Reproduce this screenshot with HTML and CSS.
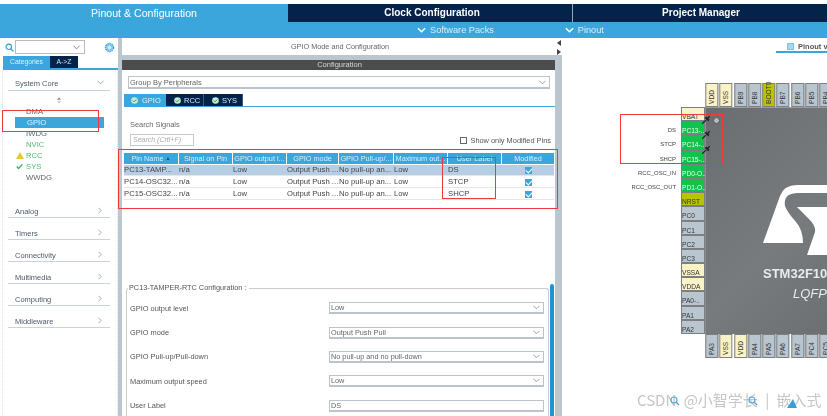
FILE: index.html
```html
<!DOCTYPE html>
<html lang="en">
<head>
<meta charset="utf-8">
<title>Pinout &amp; Configuration</title>
<link rel="stylesheet" href="styles.css">
</head>
<body>
<div class="page">
  <header class="head">
    <div class="tabs-top">
      <div class="top-tab top-on tw1">Pinout &amp; Configuration</div>
      <div class="top-tab tw2">Clock Configuration</div>
      <div class="top-tab tw3">Project Manager</div>
    </div>
    <div class="subbar">
      <span class="sub sub1"><svg class="sub-ch" viewBox="0 0 10 6"><path d="M1 1l4 4 4-4" fill="none" stroke="#fff" stroke-width="1.6"/></svg>Software Packs</span>
      <span class="sub sub2"><svg class="sub-ch" viewBox="0 0 10 6"><path d="M1 1l4 4 4-4" fill="none" stroke="#fff" stroke-width="1.6"/></svg>Pinout</span>
    </div>
  </header>
  <main class="work">
    <aside class="side">
      <div class="side-search">
        <svg class="ic-search" viewBox="0 0 10 10"><circle cx="4.2" cy="4.2" r="3" fill="none" stroke="#2b9bd6" stroke-width="1.3"/><path d="M6.5 6.5L9.4 9.4" stroke="#2b9bd6" stroke-width="1.4"/></svg>
        <div class="combo"><svg class="chev" viewBox="0 0 8 5"><path d="M.5.5L4 4 7.5.5" fill="none" stroke="#777" stroke-width="1"/></svg></div>
        <svg class="ic-gear" viewBox="0 0 12 12"><circle cx="6" cy="6" r="4.2" fill="none" stroke="#3aa5dc" stroke-width="1.8" stroke-dasharray="1.8 .6"/><circle cx="6" cy="6" r="2.8" fill="#d5ecf8" stroke="#3aa5dc" stroke-width=".8"/></svg>
      </div>
      <div class="side-tabs">
        <div class="stab stab-on">Categories</div>
        <div class="stab">A-&gt;Z</div>
      </div>
      <div class="side-body">
        <div class="grp grp-open"><span>System Core</span><svg class="grp-ch" viewBox="0 0 8 5"><path d="M.5.5L4 4 7.5.5" fill="none" stroke="#888" stroke-width=".9"/></svg></div>
        <div class="sort"><svg class="ic-sort" viewBox="0 0 5 8"><path d="M2.5 0L5 3H0z" fill="#888"/><path d="M0 4.5h5L2.5 8z" fill="#ccc"/></svg></div>
        <div class="item">DMA</div>
        <div class="item item-on">GPIO</div>
        <div class="item">IWDG</div>
        <div class="item item-g">NVIC</div>
        <div class="item item-g"><svg class="ic-warn" viewBox="0 0 8 7"><path d="M4 0l4 7H0z" fill="#e6cb2c"/></svg>RCC</div>
        <div class="item item-g"><svg class="ic-ok" viewBox="0 0 8 7"><path d="M.8 3.5l2.2 2.3L7.2 1" fill="none" stroke="#2bb35a" stroke-width="1.4"/></svg>SYS</div>
        <div class="item">WWDG</div>
        <div class="groups">
          <div class="grp"><span>Analog</span><svg class="grp-r" viewBox="0 0 5 8"><path d="M.5.5L4 4 .5 7.5" fill="none" stroke="#888" stroke-width=".9"/></svg></div>
          <div class="grp"><span>Timers</span><svg class="grp-r" viewBox="0 0 5 8"><path d="M.5.5L4 4 .5 7.5" fill="none" stroke="#888" stroke-width=".9"/></svg></div>
          <div class="grp"><span>Connectivity</span><svg class="grp-r" viewBox="0 0 5 8"><path d="M.5.5L4 4 .5 7.5" fill="none" stroke="#888" stroke-width=".9"/></svg></div>
          <div class="grp"><span>Multimedia</span><svg class="grp-r" viewBox="0 0 5 8"><path d="M.5.5L4 4 .5 7.5" fill="none" stroke="#888" stroke-width=".9"/></svg></div>
          <div class="grp"><span>Computing</span><svg class="grp-r" viewBox="0 0 5 8"><path d="M.5.5L4 4 .5 7.5" fill="none" stroke="#888" stroke-width=".9"/></svg></div>
          <div class="grp"><span>Middleware</span><svg class="grp-r" viewBox="0 0 5 8"><path d="M.5.5L4 4 .5 7.5" fill="none" stroke="#888" stroke-width=".9"/></svg></div>
        </div>
      </div>
    </aside>
    <div class="split"></div>
    <section class="center">
      <div class="c-title">GPIO Mode and Configuration</div>
      <div class="c-band"></div>
      <div class="c-dark">Configuration</div>
      <div class="sel sel-group">Group By Peripherals<svg class="chev" viewBox="0 0 8 5"><path d="M.5.5L4 4 7.5.5" fill="none" stroke="#888" stroke-width=".9"/></svg></div>
      <div class="ptabs">
        <div class="ptab ptab-on ptw1"><svg class="ic-tick" viewBox="0 0 8 8"><circle cx="4" cy="4" r="3.8" fill="#c5ecd0"/><path d="M2 4l1.5 1.5L6 2.8" fill="none" stroke="#2a9d55" stroke-width="1.1"/></svg>GPIO</div>
        <div class="ptab ptw2"><svg class="ic-tick" viewBox="0 0 8 8"><circle cx="4" cy="4" r="3.8" fill="#c5ecd0"/><path d="M2 4l1.5 1.5L6 2.8" fill="none" stroke="#2a9d55" stroke-width="1.1"/></svg>RCC</div>
        <div class="ptab ptw3"><svg class="ic-tick" viewBox="0 0 8 8"><circle cx="4" cy="4" r="3.8" fill="#c5ecd0"/><path d="M2 4l1.5 1.5L6 2.8" fill="none" stroke="#2a9d55" stroke-width="1.1"/></svg>SYS</div>
      </div>
      <div class="s-title">Search Signals</div>
      <div class="s-row">
        <div class="s-input">Search (Crtl+F)</div>
        <label class="s-check"><span class="box"></span>Show only Modified Pins</label>
      </div>
      <div class="tbl">
        <div class="tr th">
          <div class="td">Pin Name <span class="caret">&#9650;</span></div><div class="td">Signal on Pin</div><div class="td">GPIO output l...</div><div class="td">GPIO mode</div><div class="td">GPIO Pull-up/...</div><div class="td">Maximum out...</div><div class="td">User Label</div><div class="td">Modified</div>
        </div>
        <div class="tr tr-on">
          <div class="td">PC13-TAMP...</div><div class="td">n/a</div><div class="td">Low</div><div class="td">Output Push ...</div><div class="td">No pull-up an...</div><div class="td">Low</div><div class="td">DS</div><div class="td td-c"><span class="cb"></span></div>
        </div>
        <div class="tr">
          <div class="td">PC14-OSC32...</div><div class="td">n/a</div><div class="td">Low</div><div class="td">Output Push ...</div><div class="td">No pull-up an...</div><div class="td">Low</div><div class="td">STCP</div><div class="td td-c"><span class="cb"></span></div>
        </div>
        <div class="tr">
          <div class="td">PC15-OSC32...</div><div class="td">n/a</div><div class="td">Low</div><div class="td">Output Push ...</div><div class="td">No pull-up an...</div><div class="td">Low</div><div class="td">SHCP</div><div class="td td-c"><span class="cb"></span></div>
        </div>
      </div>
      <div class="cfg">
        <fieldset class="fs">
          <legend class="lg">PC13-TAMPER-RTC Configuration :</legend>
          <div class="f-row"><span>GPIO output level</span><div class="sel">Low<svg class="chev" viewBox="0 0 8 5"><path d="M.5.5L4 4 7.5.5" fill="none" stroke="#888" stroke-width=".9"/></svg></div></div>
          <div class="f-row"><span>GPIO mode</span><div class="sel">Output Push Pull<svg class="chev" viewBox="0 0 8 5"><path d="M.5.5L4 4 7.5.5" fill="none" stroke="#888" stroke-width=".9"/></svg></div></div>
          <div class="f-row"><span>GPIO Pull-up/Pull-down</span><div class="sel">No pull-up and no pull-down<svg class="chev" viewBox="0 0 8 5"><path d="M.5.5L4 4 7.5.5" fill="none" stroke="#888" stroke-width=".9"/></svg></div></div>
          <div class="f-row"><span>Maximum output speed</span><div class="sel">Low<svg class="chev" viewBox="0 0 8 5"><path d="M.5.5L4 4 7.5.5" fill="none" stroke="#888" stroke-width=".9"/></svg></div></div>
          <div class="f-row"><span>User Label</span><div class="sel">DS</div></div>
        </fieldset>
        <div class="vbar"></div>
      </div>
    </section>
    <div class="split split-r"><i class="tri tri-l"></i><i class="tri tri-r"></i></div>
    <section class="pinout">
      <div class="pv-tab"><span class="pv-ic"></span>Pinout view</div>
      <div class="pkg">
        <div class="corner"></div>
        <div class="pins-top">
          <div class="pin v cream">VDD</div>
          <div class="pin v cream">VSS</div>
          <div class="pin v">PB9</div>
          <div class="pin v">PB8</div>
          <div class="pin v olive">BOOT0</div>
          <div class="pin v">PB7</div>
          <div class="pin v">PB6</div>
          <div class="pin v">PB5</div>
          <div class="pin v">PB4</div>
        </div>
        <div class="pins-left">
          <div class="pin h cream">VBAT</div>
          <div class="pin h green"><span class="sig">DS</span>PC13-..</div>
          <div class="pin h green"><span class="sig">STCP</span>PC14-..</div>
          <div class="pin h green"><span class="sig">SHCP</span>PC15-..</div>
          <div class="pin h green"><span class="sig">RCC_OSC_IN</span>PD0-O..</div>
          <div class="pin h green"><span class="sig">RCC_OSC_OUT</span>PD1-O..</div>
          <div class="pin h olive">NRST</div>
          <div class="pin h">PC0</div>
          <div class="pin h">PC1</div>
          <div class="pin h">PC2</div>
          <div class="pin h">PC3</div>
          <div class="pin h cream">VSSA</div>
          <div class="pin h cream">VDDA</div>
          <div class="pin h">PA0-..</div>
          <div class="pin h">PA1</div>
          <div class="pin h">PA2</div>
        </div>
        <div class="chip">
          <span class="dot"></span>
          <svg class="thumb t1" viewBox="0 0 9 9"><path d="M1 8l3-3" stroke="#222" stroke-width="1"/><path d="M3 3.2L5.800 6 7 4.800 6 3.800 7.500 2.300 6.700 1.500 5.200 3 4.200 2z" fill="#222"/></svg>
          <svg class="thumb t2" viewBox="0 0 9 9"><path d="M1 8l3-3" stroke="#222" stroke-width="1"/><path d="M3 3.2L5.800 6 7 4.800 6 3.800 7.500 2.300 6.700 1.500 5.200 3 4.200 2z" fill="#222"/></svg>
          <svg class="thumb t3" viewBox="0 0 9 9"><path d="M1 8l3-3" stroke="#222" stroke-width="1"/><path d="M3 3.2L5.800 6 7 4.800 6 3.800 7.500 2.300 6.700 1.500 5.200 3 4.200 2z" fill="#222"/></svg>
          <svg class="st" viewBox="0 0 70 72"><path d="M2 58L19 11Q23 0 36 0H70V8H37Q22 8 24 21Q26 27 35 37Q42 45 42 58Z" fill="#fff"/><path d="M36 22H70V70H46L54 47Q55 41 48 34Z" fill="#fff"/></svg>
          <div class="c-name">STM32F103C8Tx</div>
          <div class="c-pack">LQFP48</div>
        </div>
        <div class="pins-bottom">
          <div class="pin v">PA3</div>
          <div class="pin v cream">VSS</div>
          <div class="pin v cream">VDD</div>
          <div class="pin v">PA4</div>
          <div class="pin v">PA5</div>
          <div class="pin v">PA6</div>
          <div class="pin v">PA7</div>
          <div class="pin v">PC4</div>
          <div class="pin v">PC5</div>
        </div>
      </div>
    </section>
  </main>
  <div class="mark m1"></div>
  <div class="mark m2"></div>
  <div class="mark m3"></div>
  <div class="mark m4"></div>
  <div class="wm">CSDN @小智学长 | 嵌入式</div>
  <svg class="lens l1" viewBox="0 0 10 10"><circle cx="4" cy="4" r="3" fill="none" stroke="#4aa8dc" stroke-width="1.1"/><path d="M6 6l3 3" stroke="#4aa8dc" stroke-width="1.3"/></svg>
  <svg class="lens l2" viewBox="0 0 10 10"><circle cx="4" cy="4" r="3" fill="none" stroke="#4aa8dc" stroke-width="1.1"/><path d="M6 6l3 3" stroke="#4aa8dc" stroke-width="1.3"/></svg>
  <svg class="lens l3" viewBox="0 0 10 10"><path d="M0 10L6 1l4 9z" fill="#3a9fd8"/></svg>
</div>
</body>
</html>
```
FILE: styles.css
```css
* { box-sizing: border-box; }
html, body { margin: 0; height: 100%; background: #fff; }
.page { position: relative; width: 827px; height: 416px; overflow: hidden; font-family: "Liberation Sans", Arial, sans-serif; color: #555; padding-top: 4px; display: flex; flex-direction: column; filter: blur(0.3px); }
.tabs-top { display: flex; height: 18px; }
.top-tab { font-size: 10px; font-weight: 700; color: #fff; background: #03234b; text-align: center; line-height: 18px; }
.top-on { background: #3aa6dc; font-weight: 400; font-size: 10.6px; }
.tw1 { width: 288px; }
.tw2 { width: 284px; padding-left: 4px; }
.tw3 { width: 255px; border-left: 1px solid #9aa7b5; padding-left: 2px; }
.subbar { height: 16px; background: #3aa6dc; display: flex; font-size: 9.2px; color: #d9f0fb; line-height: 16px; }
.sub { display: flex; align-items: center; gap: 4px; }
.sub1 { margin-left: 417px; }
.sub2 { margin-left: 71px; }
.sub-ch { width: 9px; height: 6px; }
.work { flex: 1; display: grid; grid-template-columns: 118px 4px 433px 7px 265px; min-height: 0; }
.side { display: flex; flex-direction: column; font-size: 7.5px; }
.side-search { height: 18px; display: flex; align-items: center; padding-left: 5px; }
.ic-search { width: 9px; height: 9px; }
.combo { width: 70px; height: 14px; margin-left: 1px; border: 1px solid #bbb; display: flex; align-items: center; justify-content: flex-end; padding-right: 4px; }
.chev { width: 7px; height: 5px; flex: none; }
.ic-gear { width: 11px; height: 11px; margin-left: 19px; }
.side-tabs { display: flex; margin-left: 3px; height: 14px; border-bottom: 2px solid #3aa6dc; }
.stab { width: 28px; height: 12px; background: #03234b; color: #d6e2ee; font-size: 6.8px; line-height: 12px; text-align: center; }
.stab-on { width: 47px; background: #3aa6dc; color: #dff1fb; }
.side-body { flex: 1; border-left: 1px dotted #ddd; border-right: 1px dotted #ddd; border-bottom: 1px dotted #ddd; margin-left: 2px; padding-top: 4px; }
.grp { height: 22px; margin: 0 7px 0 5px; border-bottom: 1px solid #c9d3dc; display: flex; align-items: flex-end; justify-content: space-between; padding: 0 8px 0 7px; font-size: 7.5px; line-height: 11px; color: #4c5a6b; }
.grp-open { height: 17px; padding-bottom: 1px; }
.grp-ch { width: 7px; height: 5px; margin-bottom: 4px; margin-right: -2px; }
.grp-r { width: 4px; height: 7px; margin-bottom: 3px; }
.sort { height: 15px; display: flex; justify-content: center; align-items: center; padding: 4px 3px 0 0; }
.ic-sort { width: 4px; height: 7px; }
.item { height: 11px; line-height: 11px; font-size: 7.7px; padding-left: 23px; color: #666; position: relative; }
.item-on { margin: 0 13px 0 12px; padding-left: 12px; background: #3aa6dc; color: #e3f4fc; }
.item-g { color: #54b877; }
.ic-warn { position: absolute; left: 13px; top: 2px; width: 8px; height: 7px; }
.ic-ok { position: absolute; left: 13px; top: 2px; width: 7px; height: 7px; }
.groups { margin-top: 13px; }
.split { background: #bcc6cf; }
.split-r { background: linear-gradient(#fff 17px, #bcc6cf 17px); padding: 2px 0 0 2px; display: flex; flex-direction: column; gap: 3px; }
.tri { width: 0; height: 0; border-top: 3px solid transparent; border-bottom: 3px solid transparent; }
.tri-l { border-right: 4px solid #444; }
.tri-r { border-left: 4px solid #444; }
.center { display: flex; flex-direction: column; font-size: 7.5px; min-width: 0; }
.c-title { height: 17px; line-height: 18px; text-align: center; color: #666; font-size: 7.3px; padding-left: 3px; }
.c-band { height: 5px; background: #bcc6cf; }
.c-dark { height: 10px; line-height: 10px; background: #4c4c4c; color: #d5d5d5; font-size: 7.5px; text-align: center; padding-left: 2px; }
.sel { height: 12px; border: 1px solid #bcc3ca; border-bottom-width: 2px; display: flex; align-items: center; justify-content: space-between; padding: 0 3px 0 1px; font-size: 7.3px; color: #666; }
.sel-group { height: 13px; margin: 6px 5px 0 6px; font-size: 7.5px; }
.ptabs { margin-top: 5px; margin-left: 2px; height: 13px; display: flex; border-bottom: 1px solid #3aa6dc; }
.ptab { height: 12px; background: #03234b; color: #dbe6ef; display: flex; align-items: center; gap: 3px; padding-left: 8px; font-size: 7.5px; border-right: 1px solid #3f5a78; }
.ptab-on { background: #3aa6dc; color: #dff1fb; border: 0; padding-left: 7px; gap: 4px; }
.ptw1 { width: 42px; }
.ptw2 { width: 38px; }
.ptw3 { width: 39px; }
.ic-tick { width: 7px; height: 7px; }
.s-title { margin: 13px 0 0 8px; height: 10px; line-height: 10px; font-size: 7.4px; color: #666; }
.s-row { margin-top: 4px; height: 12px; padding: 0 4px 0 8px; display: flex; justify-content: space-between; align-items: center; }
.s-input { width: 64px; height: 12px; border: 1px solid #c5c9ce; color: #aaa; font-size: 7px; font-style: italic; line-height: 10px; padding-left: 2px; }
.s-check { display: flex; align-items: center; gap: 3px; font-size: 7.4px; color: #555; }
.box { width: 7px; height: 7px; border: 1px solid #666; display: block; }
.tbl { margin: 7px 1px 0 2px; display: flex; flex-direction: column; gap: 1px; }
.tr { display: grid; grid-template-columns: 54px 53px 53px 51px 54px 53px 53px 52px; column-gap: 1px; height: 11px; border-bottom: 1px solid #e3e7ea; font-size: 7.7px; line-height: 10px; color: #444; }
.th { background: #fff; border: 0; color: #d8eefa; text-align: center; font-size: 7.3px; line-height: 11px; }
.th .td { background: #3aa6dc; }
.caret { font-size: 5px; vertical-align: 1px; color: #17507a; }
.tr-on { background: #b6cde3; }
.td { white-space: nowrap; }
.td-c { display: flex; justify-content: center; align-items: center; }
.cb { width: 7px; height: 7px; background: #3aa6dc; position: relative; display: block; }
.cb::after { content: ""; position: absolute; left: 2px; top: 0; width: 3px; height: 5px; border: solid #fff; border-width: 0 1px 1px 0; transform: rotate(45deg); }
.cfg { margin-top: 83px; flex: 1; display: flex; padding-left: 4px; min-height: 0; }
.fs { flex: 1; margin: 0; padding: 3px 0 0 3px; border: 1px solid #ccc; border-bottom: 0; border-radius: 3px 3px 0 0; min-width: 0; height: 140px; }
.lg { padding: 0 3px 0 1px; margin-left: -2px; height: 10px; line-height: 10px; font-size: 7.3px; color: #555; }
.f-row { height: 24.4px; display: grid; grid-template-columns: 199px 215px; align-items: center; font-size: 7.4px; color: #555; }
.vbar { width: 4px; margin: 1px 1px 6px 1px; background: #1f94d2; border-radius: 2px; }
.pinout { position: relative; overflow: hidden; }
.pv-tab { position: absolute; left: 214px; top: 4px; width: 60px; height: 11px; border-bottom: 2px solid #3aa6dc; font-size: 7.5px; font-weight: 700; color: #555; display: flex; align-items: center; gap: 4px; padding-left: 11px; white-space: nowrap; }
.pv-ic { width: 7px; height: 7px; background: #a9d7ef; border: 1px solid #7cc0e4; display: block; flex: none; }
.pkg { position: absolute; left: 119px; top: 45px; width: 146px; display: grid; grid-template-columns: 24px 122px; grid-template-rows: 24px 227px 24px; }
.pins-top, .pins-bottom { display: flex; gap: 1px; }
.pins-bottom { grid-column: 2; }
.pins-left { display: flex; flex-direction: column; }
.pin { background: #b9c6cf; border: 1px solid #7c7f82; color: #333; font-size: 6.6px; position: relative; white-space: nowrap; }
.pin.v { flex: none; width: 13.3px; writing-mode: vertical-rl; transform: rotate(180deg); padding-top: 2px; line-height: 11px; }
.pin.h { height: 14.2px; padding-top: 4px; line-height: 9px; }
.cream { background: #fbf3c8; }
.olive { background: #b9c400; }
.green { background: #12c24a; color: #e8ffee; }
.sig { position: absolute; right: calc(100% + 6px); top: 4px; color: #444; font-size: 5.9px; line-height: 8px; }
.chip { position: relative; background: linear-gradient(135deg, #6a6e70, #777b7d 60%, #6c7072); border-left: 1px solid #8b8f92; border-top: 1px solid #9a9ea1; }
.dot { position: absolute; left: 7px; top: 9px; width: 7px; height: 7px; border-radius: 50%; background: #b5bcc1; border: 1px solid #555; }
.thumb { position: absolute; left: -5px; width: 11px; height: 11px; }
.t1 { top: 6px; }
.t2 { top: 21px; }
.t3 { top: 36px; }
.st { position: absolute; left: 55px; top: 77px; width: 70px; height: 72px; }
.c-name { position: absolute; left: 57px; top: 158px; font-size: 13px; font-weight: 700; line-height: 15px; color: #e9ebec; white-space: nowrap; }
.c-pack { position: absolute; left: 87px; top: 178px; font-size: 13px; font-style: italic; line-height: 15px; color: #e9ebec; white-space: nowrap; }
.mark { position: absolute; border: 1.5px solid #ee3a3c; }
.m1 { left: 2px; top: 110px; width: 97px; height: 22px; }
.m2 { left: 118px; top: 149px; width: 440px; height: 60px; }
.m3 { left: 442px; top: 157px; width: 54px; height: 42px; }
.m4 { left: 620px; top: 114px; width: 103px; height: 50px; }
.wm { position: absolute; left: 637px; top: 389px; font-family: "Noto Sans CJK SC", "Liberation Sans", sans-serif; font-size: 15px; line-height: 22px; word-spacing: 4px; color: #c6c6c6; white-space: nowrap; }
.lens { position: absolute; width: 10px; height: 10px; }
.l1 { left: 670px; top: 396px; }
.l2 { left: 748px; top: 396px; }
.l3 { left: 787px; top: 398px; }
```
